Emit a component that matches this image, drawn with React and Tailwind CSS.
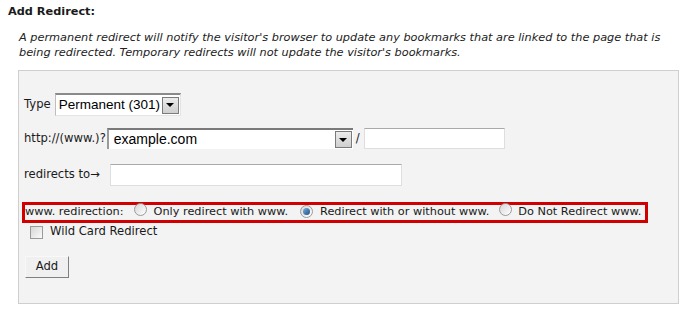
import React from "react";

function DropBtn() {
  return (
    <div className="w-[17px] h-[17px] border border-[#7b7b7b] bg-gradient-to-b from-[#ececec] to-[#cfcfcf] flex items-center justify-center">
      <div className="w-0 h-0 border-l-[4px] border-r-[4px] border-t-[4px] border-l-transparent border-r-transparent border-t-black" />
    </div>
  );
}

function Radio({ checked }) {
  return (
    <span className="inline-flex w-[13px] h-[13px] rounded-full border border-[#9a9a9a] bg-gradient-to-br from-[#d8d8d8] to-[#ffffff] items-center justify-center shrink-0">
      {checked && (
        <span className="w-[7px] h-[7px] rounded-full bg-gradient-to-br from-[#7ab2e0] to-[#1d4f86]" />
      )}
    </span>
  );
}

export default function App() {
  return (
    <div
      className="w-[689px] h-[310px] bg-white text-[11.6px] text-[#1a1a1a] overflow-hidden"
      style={{ fontFamily: '"DejaVu Sans", Verdana, sans-serif' }}
    >
      <div className="pt-[4px] pl-[8px] font-bold text-[11.3px] leading-[15px]">Add Redirect:</div>
      <p className="ml-[19px] mt-[11px] italic text-[11.3px] leading-[15px] text-[#222] w-[655px]">
        A permanent redirect will notify the visitor's browser to update any bookmarks that are linked to the page that is being redirected. Temporary redirects will not update the visitor's bookmarks.
      </p>
      <div className="ml-[18px] mt-[10px] w-[661px] h-[234px] border border-[#cfcfcf] bg-[#f3f3f3] pl-[5px] flex flex-col">
        {/* Type row */}
        <div className="mt-[22px] h-[23px] flex items-center">
          <span>Type</span>
          <div className="ml-[4px] w-[126px] h-[23px] bg-white border-t-2 border-l border-t-[#8a8a8a] border-l-[#bdbdbd] border-r border-b border-r-[#e4e4e4] border-b-[#e4e4e4] flex items-center justify-between pl-[3px] pr-[1px]">
            <span className="text-[13.5px] text-black" style={{ fontFamily: '"Liberation Sans", Arial, sans-serif' }}>
              Permanent (301)
            </span>
            <DropBtn />
          </div>
        </div>
        {/* http row */}
        <div className="mt-[12px] h-[21px] flex items-center">
          <span>http://(www.)?</span>
          <div className="ml-[1px] w-[246px] h-[21px] bg-white border-t-2 border-l-2 border-t-[#7a7a7a] border-l-[#9a9a9a] flex items-center justify-between pl-[5px] pr-[1px]">
            <span className="text-[14px] text-black" style={{ fontFamily: '"Liberation Sans", Arial, sans-serif' }}>
              example.com
            </span>
            <DropBtn />
          </div>
          <span className="ml-[3px]">/</span>
          <div className="ml-[4px] w-[141px] h-[21px] bg-white border border-[#dedede] border-t-[#a9a9a9]" />
        </div>
        {/* redirects to row */}
        <div className="mt-[15px] h-[22px] flex items-center">
          <span>redirects to→</span>
          <div className="ml-[10px] w-[292px] h-[22px] bg-white border border-[#dedede] border-t-[#a9a9a9]" />
        </div>
        {/* red box */}
        <div className="mt-[16px] ml-[-2px] w-[626px] h-[21px] border-[3px] border-[#d00000] flex items-center whitespace-nowrap text-[11.3px]">
          <span>www. redirection:</span>
          <span className="ml-[10px]"><Radio /></span>
          <span className="ml-[7px]">Only redirect with www.</span>
          <span className="ml-[12px]"><Radio checked /></span>
          <span className="ml-[7px]">Redirect with or without www.</span>
          <span className="ml-[10px]"><Radio /></span>
          <span className="ml-[6px]">Do Not Redirect www.</span>
        </div>
        {/* wildcard */}
        <div className="mt-[1px] h-[16px] flex items-center">
          <span className="ml-[6px] w-[13px] h-[13px] border border-[#9a9a9a] bg-gradient-to-br from-[#d6d6d6] to-[#fbfbfb]" />
          <span className="ml-[7px]">Wild Card Redirect</span>
        </div>
        {/* Add */}
        <div className="mt-[16px] ml-[1px]">
          <button className="w-[44px] h-[22px] bg-[#f0f0f0] border border-[#f8f8f8] border-r-[#808080] border-b-[#808080] text-[11.6px] leading-none text-[#1a1a1a]" style={{ fontFamily: '"DejaVu Sans", Verdana, sans-serif' }}>
            Add
          </button>
        </div>
      </div>
    </div>
  );
}
